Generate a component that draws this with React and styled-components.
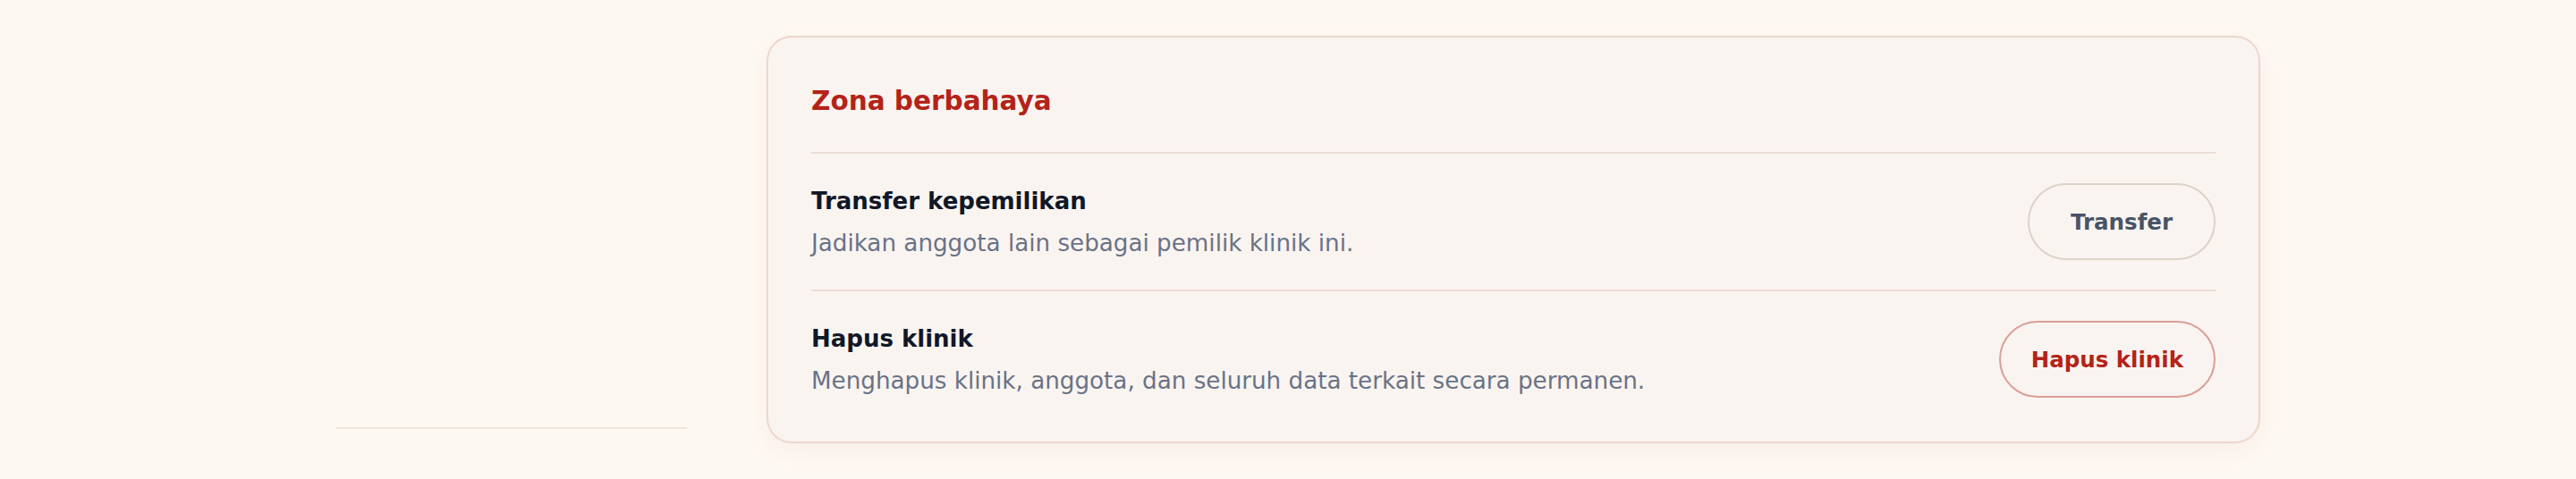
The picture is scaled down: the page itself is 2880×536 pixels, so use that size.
import React from 'react'
import styled, { createGlobalStyle } from 'styled-components'

const GlobalStyle = createGlobalStyle`
	html, body {
		margin: 0;
		padding: 0;
		background: #fef8f3;
	}
	body {
		font-family: "DejaVu Sans", "Liberation Sans", sans-serif;
		-webkit-font-smoothing: antialiased;
	}
`

const rows = [
	{
		title: 'Transfer kepemilikan',
		text: 'Jadikan anggota lain sebagai pemilik klinik ini.',
		action: 'Transfer',
		danger: false,
	},
	{
		title: 'Hapus klinik',
		text: 'Menghapus klinik, anggota, dan seluruh data terkait secara permanen.',
		action: 'Hapus klinik',
		danger: true,
	},
]

const DangerRow = ({ title, text, action, danger }) => (
	<Row>
		<RowText>
			<RowTitle>{title}</RowTitle>
			<RowDesc>{text}</RowDesc>
		</RowText>
		<ActionButton type="button" $danger={danger}>{action}</ActionButton>
	</Row>
)

const App = () => (
	<>
		<GlobalStyle />
		<Page>
			<Sidebar>
				<SidebarRule />
			</Sidebar>
			<Card>
				<CardTitle>Zona berbahaya</CardTitle>
				{rows.map(row => (
					<DangerRow {...row} key={row.title} />
				))}
			</Card>
		</Page>
	</>
)

export default App

const Page = styled.div`
	display: flex;
	align-items: stretch;
	gap: 89px;
	height: 536px;
	box-sizing: border-box;
	padding: 40px 0 0 375px;
`

const Sidebar = styled.aside`
	width: 393px;
	height: 456px;
	display: flex;
	flex-direction: column;
	justify-content: flex-end;
	padding-bottom: 16px;
	box-sizing: border-box;
`

const SidebarRule = styled.div`
	height: 2px;
	background: #efe7dd;
`

const Card = styled.section`
	width: 1670px;
	height: 456px;
	box-sizing: border-box;
	padding: 51px 48px 14px;
	background: #faf4f1;
	border: 2px solid #edd6cb;
	border-radius: 28px;
	box-shadow: 0 10px 28px rgba(150, 80, 50, 0.06);
`

const CardTitle = styled.h2`
	margin: 0;
	padding-bottom: 37px;
	font-size: 29.5px;
	line-height: 40px;
	font-weight: 700;
	color: #b42318;
`

const Row = styled.div`
	display: flex;
	align-items: center;
	justify-content: space-between;
	height: 154px;
	border-top: 2px solid #eddcd4;
	box-sizing: border-box;
`

const RowText = styled.div`
	display: flex;
	flex-direction: column;
	gap: 8px;
`

const RowTitle = styled.h3`
	margin: 0;
	font-size: 26px;
	line-height: 40px;
	font-weight: 700;
	color: #101828;
`

const RowDesc = styled.p`
	margin: 0;
	font-size: 26.2px;
	line-height: 38px;
	color: #697386;
`

const ActionButton = styled.button`
	height: 86px;
	min-width: 210px;
	padding: 0 34px;
	box-sizing: border-box;
	border-radius: 999px;
	background: transparent;
	font-family: inherit;
	font-size: 24.5px;
	font-weight: 700;
	cursor: pointer;
	border: 2px solid ${({ $danger }) => ($danger ? '#d99f96' : '#dbd3c6')};
	color: ${({ $danger }) => ($danger ? '#b42318' : '#475467')};
`
